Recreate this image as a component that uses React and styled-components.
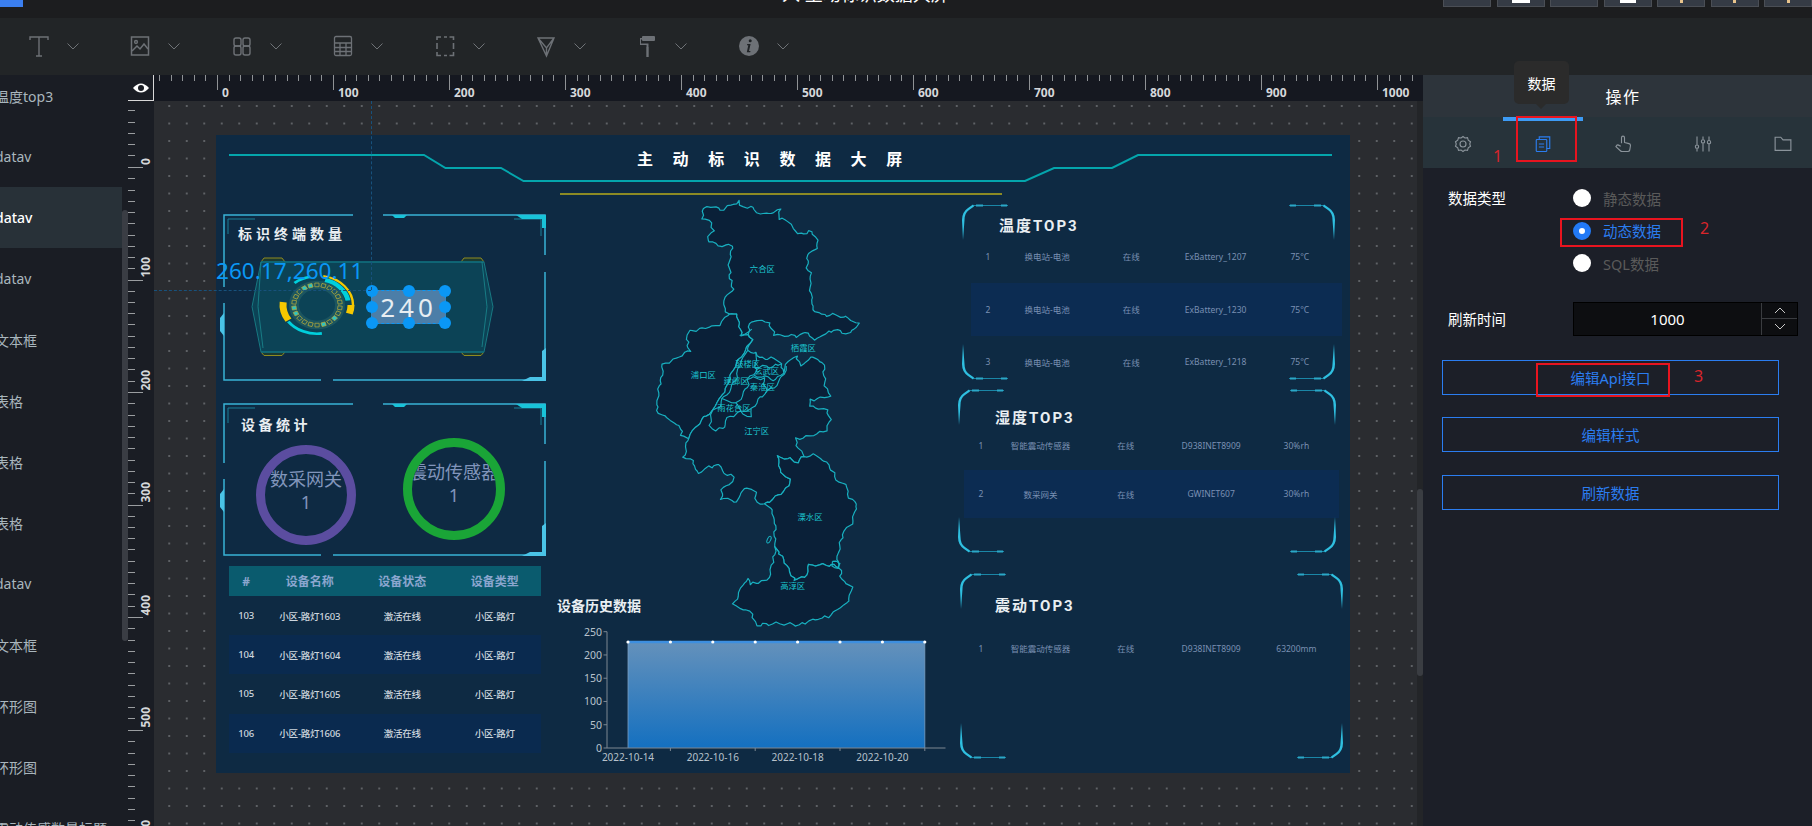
import React from 'react'
import styled, { createGlobalStyle } from 'styled-components'

const FONT = `"Noto Sans", "Noto Sans CJK SC", sans-serif`

// --- Data ---
const LAYERS = ['温度top3', 'datav', 'datav', 'datav', '文本框', '表格', '表格', '表格', 'datav', '文本框', '环形图', '环形图', '震动传感数量标题']
const TOP_MARKS = [0, 18, 0, 16, 3, 3, 3]
const DEVICES = [
  ['103', '小区-路灯1603'],
  ['104', '小区-路灯1604'],
  ['105', '小区-路灯1605'],
  ['106', '小区-路灯1606'],
]
const TEMP = [
  ['1', '换电站-电池', '在线', 'ExBattery_1207', '75°C'],
  ['2', '换电站-电池', '在线', 'ExBattery_1230', '75°C'],
  ['3', '换电站-电池', '在线', 'ExBattery_1218', '75°C'],
]
const HUMIDITY = [
  ['1', '智能震动传感器', '在线', 'D938INET8909', '30%rh'],
  ['2', '数采网关', '在线', 'GWINET607', '30%rh'],
]
const VIBRATION = [['1', '智能震动传感器', '在线', 'D938INET8909', '63200mm']]
const HANDLES = [
  [0, 0], [50, 0], [100, 0],
  [0, 50], [100, 50],
  [0, 100], [50, 100], [100, 100],
]

// --- Map outlines, traced in a 720x1320 box ---
const DISTRICTS = [
  [265,370, 250,345, 255,320, 268,310, 280,295, 272,270, 268,235, 275,165, 250,168, 235,165, 208,155, 205,140, 220,122, 215,100, 190,85, 185,65, 205,47, 225,52, 240,62, 270,45, 295,36, 300,50, 330,50, 350,68, 385,72, 400,66, 420,58, 415,88, 445,90, 458,110, 470,132, 490,130, 515,125, 535,155, 530,178, 505,185, 500,235, 515,262, 508,290, 516,320, 518,355, 545,375, 590,375, 625,385, 655,400, 630,430, 580,420, 545,435, 522,452, 505,425, 470,438, 405,435, 385,395, 345,392, 325,410, 325,430, 305,440, 290,375],
  [265,370, 240,405, 190,415, 150,425, 140,445, 148,480, 125,495, 70,525, 62,570, 55,620, 48,660, 75,680, 120,710, 125,735, 145,745, 170,705, 215,662, 250,610, 280,540, 310,490, 335,450, 325,430, 305,440, 290,375],
  [325,430, 335,450, 322,482, 350,490, 355,505, 395,505, 425,520, 430,545, 450,505, 470,500, 480,530, 495,515, 520,500, 550,520, 555,585, 572,618, 515,630, 508,650, 560,660, 570,690, 560,720, 520,735, 470,748, 470,770, 495,800, 475,815, 440,805, 415,800, 420,850, 450,865, 450,885, 420,910, 375,945, 350,935, 345,905, 315,895, 290,935, 245,925, 245,900, 280,875, 275,855, 250,850, 240,825, 205,830, 180,850, 165,840, 160,815, 130,800, 145,745, 170,705, 215,662, 250,610, 280,540, 310,490, 335,450],
  [375,945, 420,910, 450,885, 450,865, 420,850, 415,800, 440,805, 475,815, 495,800, 530,795, 560,820, 595,875, 620,885, 625,925, 650,940, 635,1000, 610,1030, 600,1070, 590,1105, 600,1130, 565,1125, 510,1125, 495,1160, 465,1170, 405,1070, 405,1000, 395,960],
  [405,1070, 465,1170, 495,1160, 510,1125, 565,1125, 600,1130, 605,1165, 635,1195, 620,1240, 565,1280, 520,1290, 480,1305, 420,1300, 350,1305, 330,1265, 280,1243, 310,1180, 325,1165, 330,1183, 385,1170, 400,1120],
]
const INNER_LINES = [
  [322,482, 300,520, 290,560, 275,590, 250,630, 290,640, 320,600, 325,565, 345,555, 348,510, 350,490],
  [348,530, 395,530, 425,520],
  [345,555, 410,570, 430,545],
  [325,565, 370,565, 380,610],
  [215,662, 208,705, 225,720, 245,715, 265,685, 300,665, 330,660, 355,630, 380,610, 420,570, 440,530],
  [250,630, 235,650, 215,662],
  [290,640, 300,665, 330,680, 335,660],
  [575,1118, 590,1112, 603,1120, 595,1135, 580,1132, 575,1118],
  [300,440, 335,420],
]
const MAP_LABELS = [
  ['六合区', 367, 238], ['浦口区', 190, 555], ['栖霞区', 490, 473], ['鼓楼区', 323, 522],
  ['玄武区', 380, 542], ['建邺区', 288, 574], ['秦淮区', 367, 590], ['雨花台区', 282, 654],
  ['江宁区', 350, 723], ['溧水区', 510, 980], ['高淳区', 458, 1187],
]

// --- Drawing helpers ---
const arc = (r, a0, a1) => {
  const p = (a) => [r * Math.cos((a * Math.PI) / 180), r * Math.sin((a * Math.PI) / 180)]
  const [x0, y0] = p(a0)
  const [x1, y1] = p(a1)
  return `M${x0} ${y0} A${r} ${r} 0 ${a1 - a0 > 180 ? 1 : 0} 1 ${x1} ${y1}`
}

// displace by a field of the position, so that shared borders stay shared
const wiggle = (x, y) => [
  x + 3.2 * Math.sin(y * 0.19 + x * 0.07) + 1.6 * Math.sin(y * 0.53 - x * 0.31),
  y + 3.2 * Math.sin(x * 0.17 - y * 0.05) + 1.6 * Math.sin(x * 0.47 + y * 0.29),
]
const roughPath = (pts, closed) => {
  const out = []
  const n = pts.length / 2
  const last = closed ? n : n - 1
  for (let i = 0; i < last; i++) {
    const x0 = pts[i * 2]
    const y0 = pts[i * 2 + 1]
    const x1 = pts[((i + 1) % n) * 2]
    const y1 = pts[((i + 1) % n) * 2 + 1]
    const steps = Math.max(1, Math.round(Math.hypot(x1 - x0, y1 - y0) / 10))
    for (let s = 0; s < steps; s++) {
      out.push(wiggle(x0 + ((x1 - x0) * s) / steps, y0 + ((y1 - y0) * s) / steps))
    }
  }
  if (!closed) out.push(wiggle(pts[pts.length - 2], pts[pts.length - 1]))
  return `M${out.map(([x, y]) => `${x.toFixed(1)} ${y.toFixed(1)}`).join(' L')}${closed ? ' Z' : ''}`
}

// --- Icons ---
const Chevron = () => (
  <svg width="12" height="7" viewBox="0 0 12 7" fill="none" stroke="#6f7377" strokeWidth="1">
    <path d="M0.5 0.5 L6 6 L11.5 0.5" />
  </svg>
)
const TOOL_ICONS = [
  <g key="t" fill="none" stroke="#6d7176" strokeWidth="1.4">
    <path d="M2 5 V2 H20 V5 M11 2 V21 M8 21 H14" />
  </g>,
  <g key="image" fill="none" stroke="#6d7176" strokeWidth="1.5">
    <rect x="2.5" y="2" width="17" height="18" />
    <circle cx="7" cy="7" r="1.4" />
    <path d="M3 16 L8 11 L11 14 L15 9 L19 14" />
  </g>,
  <g key="88" fill="none" stroke="#6d7176" strokeWidth="1.4">
    <rect x="3" y="3" width="7" height="8" rx="2" />
    <rect x="3" y="11" width="7" height="9" rx="2" />
    <rect x="12" y="3" width="7" height="8" rx="2" />
    <rect x="12" y="11" width="7" height="9" rx="2" />
  </g>,
  <g key="table" fill="none" stroke="#6d7176" strokeWidth="1.3">
    <rect x="2.5" y="1.5" width="17" height="19" rx="1.5" />
    <path d="M2.5 8 H19.5 M2.5 12.5 H19.5 M2.5 16.5 H19.5 M8 8 V20.5 M14 8 V20.5" />
  </g>,
  <g key="frame" fill="none" stroke="#6d7176" strokeWidth="1.6">
    <path d="M3 5 V2 H7 M10 2 H13 M15.5 2 H19.5 V5 M19.5 8 V14 M19.5 17 V20.5 H15.5 M13 20.5 H10 M7 20.5 H3 V17 M3 14 V8" />
  </g>,
  <g key="filter" fill="none" stroke="#6d7176" strokeWidth="1.4">
    <path d="M3 3 L19 3 L11.5 21 Z M3 3 L11.5 13 L19 3 M11.5 13 V21" />
  </g>,
  <g key="roller" fill="#6d7176" stroke="none">
    <rect x="6" y="1" width="13" height="5" rx="1" />
    <path d="M4 3 H6 V4.5 H5 V8.5 H12.5 V12 H10.5 V10 H4 Z" />
    <rect x="10.3" y="12" width="2.4" height="10" />
  </g>,
  <g key="info">
    <circle cx="11" cy="11" r="10" fill="#6d7176" />
    <circle cx="12.2" cy="5.7" r="1.5" fill="#1f2326" />
    <path d="M9.2 9 H12.6 L11 16 H12.5 L12.2 17.3 H8.8 L10.3 10.3 H9 Z" fill="#1f2326" />
  </g>,
]
const PANEL_ICONS = [
  <g key="gear" fill="none" stroke="#8b949b" strokeWidth="1.5">
    <path d="M12 2 L14.5 4 L18 3.6 L19 6.8 L22 9 L21 12 L22 15 L19 17.2 L18 20.4 L14.5 20 L12 22 L9.5 20 L6 20.4 L5 17.2 L2 15 L3 12 L2 9 L5 6.8 L6 3.6 L9.5 4 Z" />
    <circle cx="12" cy="12" r="4" />
  </g>,
  <g key="doc" fill="none" stroke="#2b7df0" strokeWidth="1.5">
    <rect x="3" y="6" width="14" height="16" rx="1" />
    <path d="M7 6 V2.5 H21 V18 H17 M6.5 12 H13.5 M6.5 16 H13.5" />
  </g>,
  <g key="hand" fill="none" stroke="#8b949b" strokeWidth="1.5" strokeLinejoin="round">
    <path d="M10 11 V3.5 A2 2 0 0 1 14 3.5 V10 L20 11.5 Q22 12 22 14 L21 20 Q20.5 22 18.5 22 H11 Q9.5 22 8.5 21 L2.5 15.5 L4 13.5 Q5 13 6 13.5 L9 15" />
  </g>,
  <g key="sliders" fill="none" stroke="#8b949b" strokeWidth="1.5">
    <path d="M4 2 V13 M4 18 V22 M12 2 V6 M12 11 V22 M20 2 V7 M20 12 V22" />
    <circle cx="4" cy="15.5" r="2.2" />
    <circle cx="12" cy="8.5" r="2.2" />
    <circle cx="20" cy="9.5" r="2.2" />
  </g>,
  <g key="folder" fill="none" stroke="#8b949b" strokeWidth="1.5">
    <path d="M1.5 3 H9 L12 6.5 H22.5 V20.5 H1.5 Z" />
  </g>,
]

// --- Global ---
const GlobalStyle = createGlobalStyle`
  html, body { margin: 0; padding: 0; background: #1c1d1f; }
  * { box-sizing: border-box; }
  #root { width: 1812px; height: 826px; overflow: hidden; font-family: ${FONT}; }
`

// --- Shell ---
const Page = styled.div`
  display: flex;
  flex-direction: column;
  width: 1812px;
  height: 826px;
  overflow: hidden;
  background: #1c1d1f;
`
const TopBar = styled.header`
  flex: none;
  height: 18px;
  display: flex;
  align-items: flex-start;
  background: #1c1d1f;
  overflow: hidden;
`
const Brand = styled.div`
  flex: none;
  width: 23px;
  height: 7px;
  background: #3b7ff0;
`
const DocTitle = styled.div`
  margin: -18px 0 0 759px;
  width: 190px;
  flex: none;
  font-size: 18px;
  line-height: 24px;
  color: #fff;
  white-space: nowrap;
`
const TopActions = styled.div`
  margin-left: auto;
  display: flex;
  gap: 5.5px;
`
const TopButton = styled.div`
  width: 48px;
  height: 7px;
  display: flex;
  justify-content: center;
  background: #353b45;
  border: 1px solid #4a4e55;
  border-top: 0;
`
const TopMark = styled.span`
  width: ${(p) => p.$w}px;
  height: 3px;
  background: ${(p) => (p.$w < 5 ? '#e9c48c' : '#fff')};
`
const Toolbar = styled.div`
  flex: none;
  height: 57px;
  display: flex;
  align-items: center;
  padding-left: 28px;
  background: #222527;
`
const ToolItem = styled.div`
  flex: none;
  width: 101.4px;
  display: flex;
  align-items: center;
  gap: 17px;
`
const ToolIcon = styled.svg`
  width: 22px;
  height: 24px;
`
const Main = styled.div`
  flex: 1;
  display: flex;
  min-height: 0;
`

// --- Layer list ---
const Sidebar = styled.aside`
  flex: none;
  position: relative;
  width: 128px;
  background: #1a1d24;
  overflow: hidden;
`
const LayerRow = styled.div`
  width: 122px;
  height: 61px;
  display: flex;
  align-items: center;
  font-size: 14px;
  white-space: nowrap;
  overflow: hidden;
  color: ${(p) => (p.$active ? '#fff' : '#a9b6bd')};
  background: ${(p) => (p.$active ? '#283138' : 'transparent')};
  font-weight: ${(p) => (p.$active ? 500 : 400)};
  &:first-child { margin-top: -10px; }
`
const LayerName = styled.span`
  margin-left: -5px;
`
const LayerScroll = styled.div`
  position: absolute;
  top: 135px;
  right: 0;
  width: 6px;
  height: 431px;
  border-radius: 3px;
  background: #3a3d44;
`

// --- Workspace with rulers ---
const Workspace = styled.section`
  flex: none;
  width: 1295px;
  display: grid;
  grid-template-columns: 26px 1fr;
  grid-template-rows: 26px 1fr;
`
const RulerCorner = styled.div`
  display: flex;
  align-items: center;
  justify-content: center;
  background: #1a1d24;
  border-right: 1px solid #d8d8d8;
  border-bottom: 1px solid #d8d8d8;
`
const HRuler = styled.div`
  display: flex;
  overflow: hidden;
  background: #151820;
`
const HCell = styled.div`
  flex: none;
  width: 116px;
  height: 26px;
  padding: 9px 0 0 5px;
  font-size: 12px;
  line-height: 17px;
  font-weight: 700;
  color: #d5d7da;
  background:
    linear-gradient(#8f9295, #8f9295) left top / 1px 15px no-repeat,
    repeating-linear-gradient(to right, #8f9295 0 1px, transparent 1px 11.6px) left top / 100% 6px no-repeat;
  &:first-child { margin-left: -53px; }
`
const VRuler = styled.div`
  display: flex;
  flex-direction: column;
  overflow: hidden;
  background: #1a1d24;
`
const VCell = styled.div`
  flex: none;
  height: 112.6px;
  display: flex;
  align-items: flex-end;
  padding: 0 0 3px 12px;
  background:
    linear-gradient(#9a9da0, #9a9da0) left bottom / 15px 1px no-repeat,
    repeating-linear-gradient(to top, #9a9da0 0 1px, transparent 1px 11.26px) left bottom / 7px 100% no-repeat;
  &:first-child { margin-top: -45.6px; }
`
const VLabel = styled.span`
  writing-mode: vertical-rl;
  transform: rotate(180deg);
  font-size: 12px;
  line-height: 12px;
  font-weight: 700;
  color: #d5d7da;
`
const Canvas = styled.div`
  position: relative;
  overflow: hidden;
  background-color: #2a2c30;
  background-image: radial-gradient(circle, #5f6266 1px, transparent 1.2px);
  background-size: 17.5px 17.5px;
  background-position: 6.5px -3.75px;
`
const CanvasTrack = styled.div`
  position: absolute;
  top: 0;
  right: 0;
  bottom: 0;
  width: 6px;
  background: #232528;
`
const CanvasThumb = styled.div`
  position: absolute;
  top: 388px;
  right: 0;
  width: 6px;
  height: 187px;
  border-radius: 3px;
  background: #3a3d42;
`
const GuideV = styled.div`
  position: absolute;
  z-index: 3;
  left: 217px;
  top: 0;
  height: 189px;
  border-left: 1px dashed #17517c;
`
const GuideH = styled.div`
  position: absolute;
  z-index: 3;
  left: 0;
  top: 189px;
  width: 217px;
  border-top: 1px dashed #17517c;
`

// --- Big screen, a free canvas ---
const Screen = styled.div`
  position: absolute;
  left: 62px;
  top: 34px;
  width: 1134px;
  height: 638px;
  background: #0e2a43;
`
const Widget = styled.div`
  position: absolute;
  left: ${(p) => p.$x}px;
  top: ${(p) => p.$y}px;
  width: ${(p) => p.$w}px;
  height: ${(p) => p.$h}px;
`
const WidgetArt = styled.svg`
  display: block;
  width: 100%;
  height: 100%;
  overflow: visible;
`
const ScreenTitle = styled.h1`
  margin: 0;
  font-size: 16px;
  line-height: 24px;
  font-weight: 700;
  letter-spacing: 19.6px;
  color: #fff;
  white-space: nowrap;
`
const GoldRule = styled.div`
  height: 2px;
  background: #8b8a24;
`
const BoxTitle = styled.h2`
  margin: 0;
  font-size: 14px;
  line-height: 20px;
  font-weight: 700;
  letter-spacing: ${(p) => p.$spacing ?? 4}px;
  color: #e9eef2;
  white-space: nowrap;
`
const Coord = styled.div`
  font-size: 22.6px;
  line-height: 30px;
  color: #0a97f5;
  white-space: nowrap;
`
const ValueBox = styled.div`
  position: relative;
  height: 100%;
  display: flex;
  align-items: center;
  justify-content: center;
  background: #4c7ea8;
  border: 1px dashed #0a97f5;
  font-size: 26px;
  letter-spacing: 4px;
  color: #e8eef2;
`
const Handle = styled.span`
  position: absolute;
  left: ${(p) => p.$l}%;
  top: ${(p) => p.$t}%;
  width: 12px;
  height: 12px;
  margin: -6px 0 0 -6px;
  border-radius: 50%;
  background: #0a97f5;
`
const Donut = styled.div`
  width: 100%;
  height: 100%;
  display: flex;
  flex-direction: column;
  align-items: center;
  justify-content: center;
  padding-bottom: ${(p) => p.$lift}px;
  border-radius: 50%;
  border: 9px solid ${(p) => p.$color};
  overflow: hidden;
  color: #8195bb;
  font-size: 18px;
  line-height: 23px;
  white-space: nowrap;
`

// --- Device table ---
const DeviceTable = styled.div`
  display: flex;
  flex-direction: column;
`
const DeviceHead = styled.div`
  display: grid;
  grid-template-columns: 35px repeat(3, 1fr);
  height: 30px;
  background: #0a5b6e;
  color: #8ba6cf;
  font-size: 12px;
  font-weight: 700;
`
const DeviceRow = styled.div`
  display: grid;
  grid-template-columns: 35px repeat(3, 1fr);
  height: 39.2px;
  background: ${(p) => (p.$striped ? '#0a2a4f' : 'transparent')};
  color: #cdd6de;
  font-size: 9.5px;
  font-weight: 500;
  letter-spacing: -0.2px;
`
const TableCell = styled.div`
  display: flex;
  align-items: center;
  justify-content: center;
  white-space: nowrap;
`

// --- Rank tables ---
const RankBox = styled.div`
  position: relative;
  height: 100%;
`
const Corner = styled.svg`
  position: absolute;
  width: 46px;
  height: 37px;
  ${(p) => (p.$bottom ? 'bottom: 0;' : 'top: 0;')}
  ${(p) => (p.$right ? 'right: 0;' : 'left: 0;')}
  transform: scale(${(p) => (p.$right ? -1 : 1)}, ${(p) => (p.$bottom ? -1 : 1)});
`
const RankTitle = styled.h3`
  margin: 0;
  padding: ${(p) => p.$top}px 0 0 ${(p) => p.$pad}px;
  height: ${(p) => p.$h}px;
  display: flex;
  align-items: center;
  font-family: Roboto, "Noto Sans CJK SC", sans-serif;
  font-size: 15px;
  font-weight: 700;
  letter-spacing: 2px;
  color: #e9eef2;
  white-space: nowrap;
`
const RankRows = styled.div`
  margin-left: ${(p) => p.$left}px;
  width: ${(p) => p.$w}px;
`
const RankRow = styled.div`
  display: grid;
  grid-template-columns: 34px repeat(4, 1fr);
  height: ${(p) => p.$h}px;
  background: ${(p) => (p.$striped ? '#0c2c52' : 'transparent')};
  color: #7a90b2;
  font-size: 8.5px;
`

// --- Right panel ---
const Panel = styled.aside`
  flex: none;
  position: relative;
  z-index: 5;
  width: 389px;
  display: flex;
  flex-direction: column;
  background: #1c1f28;
`
const PanelHead = styled.div`
  flex: none;
  height: 42px;
  padding-left: 11px;
  display: flex;
  align-items: center;
  justify-content: center;
  background: #2d343b;
  color: #fff;
  font-size: 16px;
  letter-spacing: 1.5px;
`
const TabBar = styled.div`
  flex: none;
  height: 51px;
  display: flex;
  overflow: hidden;
  background: #27333a;
`
const Tab = styled.div`
  flex: none;
  width: 80px;
  display: flex;
  align-items: center;
  justify-content: center;
  padding-top: 2px;
  box-shadow: ${(p) => (p.$active ? 'inset 0 4px 0 #3d9bf5' : 'none')};
`
const TabIcon = styled.svg`
  width: 18px;
  height: 18px;
`
const Tooltip = styled.div`
  position: absolute;
  left: 91px;
  top: -14px;
  width: 55px;
  height: 43px;
  display: flex;
  align-items: center;
  justify-content: center;
  border-radius: 5px;
  background: #2b2b2b;
  color: #fff;
  font-size: 14px;
  &::after {
    content: '';
    position: absolute;
    left: 22px;
    bottom: -5px;
    border-left: 5px solid transparent;
    border-right: 5px solid transparent;
    border-top: 5px solid #2b2b2b;
  }
`
const Form = styled.div`
  flex: 1;
  padding: 14px 0 0 25px;
  display: flex;
  flex-direction: column;
`
const FormRow = styled.div`
  display: flex;
  align-items: ${(p) => (p.$center ? 'center' : 'flex-start')};
  margin-top: ${(p) => p.$top || 0}px;
`
const FormLabel = styled.div`
  flex: none;
  width: 125px;
  font-size: 14.5px;
  line-height: 32px;
  color: #fff;
`
const RadioGroup = styled.div`
  display: flex;
  flex-direction: column;
`
const RadioRow = styled.div`
  height: 32.5px;
  display: flex;
  align-items: center;
  gap: 12px;
  font-size: 14.5px;
  color: ${(p) => (p.$on ? '#2b7df0' : '#5a5a5a')};
`
const RadioDot = styled.span`
  flex: none;
  width: 18px;
  height: 18px;
  border-radius: 50%;
  background: #fff;
  border: ${(p) => (p.$on ? '6.5px solid #2279f5' : '0')};
`
const NumberInput = styled.div`
  flex: none;
  width: 225px;
  height: 34px;
  display: flex;
  background: #0d0e11;
  border: 1px solid #000;
`
const NumberValue = styled.div`
  flex: 1;
  display: flex;
  align-items: center;
  justify-content: center;
  color: #fff;
  font-size: 15px;
`
const Stepper = styled.div`
  flex: none;
  width: 36px;
  display: flex;
  flex-direction: column;
  border-left: 1px solid #3a3c40;
`
const StepBtn = styled.div`
  flex: 1;
  display: flex;
  align-items: center;
  justify-content: center;
  & + & { border-top: 1px solid #3a3c40; }
`
const ButtonStack = styled.div`
  margin: 24px 0 0 -6px;
  width: 337px;
  display: flex;
  flex-direction: column;
  gap: 22.5px;
`
const OutlineButton = styled.div`
  height: 35px;
  display: flex;
  align-items: center;
  justify-content: center;
  border: 1px solid #2b7df0;
  color: #2b7df0;
  font-size: 14.5px;
`
const RedBox = styled.div`
  position: absolute;
  left: ${(p) => p.$x}px;
  top: ${(p) => p.$y}px;
  width: ${(p) => p.$w}px;
  height: ${(p) => p.$h}px;
  border: 2px solid #e8141f;
`
const RedNumber = styled.span`
  position: absolute;
  left: ${(p) => p.$x}px;
  top: ${(p) => p.$y}px;
  color: #d9252b;
  font-size: 16px;
  line-height: 20px;
`

// --- Widgets drawn as art ---
const HudFrame = ({ w, h, gap }) => (
  <WidgetArt viewBox={`0 0 ${w} ${h}`} fill="none">
    <path d={`M1 ${gap} V1 H130 M160 1 H${w - 1} V41 M${w - 1} 58 V${h - 1} H110 M98 ${h - 1} H1 V${gap + 16}`} stroke="#38b3d6" strokeWidth="1.5" />
    <path d={`M5 20 V5 H32 M${w - 32} 5 H${w - 5} V22`} stroke="#1a7f98" strokeWidth="1" />
    <path d={`M169 1 H184 L181 4 H172 Z M${w - 30} 1 H${w} V14 L${w - 4} 14 V5 H${w - 24} Z`} fill="#19c3d9" />
    <path d={`M${w} ${h} H${w - 24} L${w - 16} ${h - 4} H${w - 4} V${h - 30} L${w} ${h - 33} Z`} fill="#4ac3e6" />
    <path d={`M1 ${gap + 26} L-3 ${gap + 31} V${gap + 44} L1 ${gap + 49} Z`} fill="#4ac3e6" />
  </WidgetArt>
)

const Gauge = () => (
  <WidgetArt viewBox="245 255 255 105" fill="none">
    <path d="M261 262 L264 258 H282 L285 262 M461 262 L464 258 H481 L484 262 M261 352 L264 355.5 H282 L285 352 M461 352 L464 355.5 H481 L484 352" stroke="#8f8a20" strokeWidth="1" fill="#1c3a30" />
    <polygon points="261,262 484,262 493,306.7 484,352 261,352 252,306.7" fill="#0c4356" stroke="#1a8a90" strokeWidth="0.8" />
    <path d="M261 262 H484 M261 352 H484" stroke="#0f6a7a" strokeWidth="1.6" />
    <path d="M261 262 L258 306.7 L263 348 M482 262 L487 306.7 L482 347" stroke="#1a8a90" strokeWidth="0.8" />
    <g transform="translate(317 305) scale(1 .87)">
      <circle r="23" stroke="#1b5560" strokeWidth="10" />
      {Array.from({ length: 22 }, (_, i) => {
        const filled = [2, 4, 9, 10, 14, 15].includes(i)
        return (
          <rect
            key={i}
            x="21"
            y="-2.1"
            width="4.2"
            height="4.2"
            transform={`rotate(${(i * 360) / 22 + 8})`}
            stroke="#b0a83a"
            strokeWidth="0.8"
            fill={filled ? '#2cc4c4' : 'none'}
          />
        )
      })}
    </g>
    <g transform="translate(317 305) scale(1 .82)">
      <path d={arc(34, 147, 186)} stroke="#f5c800" strokeWidth="7" />
      <path d={arc(35, 82, 145)} stroke="#00cfdc" strokeWidth="3.2" />
      <path d={arc(35, 230, 259)} stroke="#00cfdc" strokeWidth="3.2" />
      <path d={arc(36, 280, 360)} stroke="#f5c800" strokeWidth="2.4" />
      <path d={arc(31.5, 285, 350)} stroke="#00cfdc" strokeWidth="5" />
      <path d={arc(34, 0, 18)} stroke="#f5c800" strokeWidth="7" />
    </g>
  </WidgetArt>
)

const DistrictMap = () => (
  <WidgetArt viewBox="0 0 720 1320" fill="none">
    {DISTRICTS.map((pts, i) => (
      <path key={i} d={roughPath(pts, true)} fill="#0a2038" stroke="#18b0c0" strokeWidth="3.6" strokeLinejoin="round" />
    ))}
    {INNER_LINES.map((pts, i) => (
      <path key={i} d={roughPath(pts, false)} stroke="#18b0c0" strokeWidth="3.4" strokeLinejoin="round" />
    ))}
    <ellipse cx="387" cy="1049" rx="5" ry="11" transform="rotate(25 387 1049)" stroke="#18b0c0" strokeWidth="3" />
    {MAP_LABELS.map(([name, x, y]) => (
      <text key={name} x={x} y={y + 9} textAnchor="middle" fontSize="25" fill="#1cc5cf" fontFamily={FONT}>{name}</text>
    ))}
  </WidgetArt>
)

const HistoryChart = () => {
  const xs = Array.from({ length: 8 }, (_, i) => 628 + i * 42.4)
  const ys = [250, 200, 150, 100, 50, 0]
  return (
    <WidgetArt viewBox="590 625 360 140" fill="none">
      <defs>
        <linearGradient id="area" x1="0" y1="0" x2="0" y2="1">
          <stop offset="0" stopColor="#6491bb" />
          <stop offset="1" stopColor="#1470c0" />
        </linearGradient>
      </defs>
      <rect x="628" y="642" width="296.8" height="106" fill="url(#area)" />
      <path d="M628 642 V748 M924.8 642 V748" stroke="#7b9fc2" strokeWidth="0.8" />
      <path d="M628 642 H924.8" stroke="#3d8fe0" strokeWidth="2.5" />
      <path d="M607 631.7 V748 H945.5" stroke="#7c8792" strokeWidth="1" />
      {ys.map((v, i) => (
        <g key={v}>
          <path d={`M603.5 ${631.7 + i * 23.26} H607`} stroke="#7c8792" />
          <text x="602" y={635.5 + i * 23.26} textAnchor="end" fontSize="10.5" fill="#b8c2cc" fontFamily={FONT}>{v}</text>
        </g>
      ))}
      {xs.map((x) => <circle key={x} cx={x} cy="642" r="1.6" fill="#fff" />)}
      {[670.4, 755.2, 840, 924.8].map((x) => <path key={x} d={`M${x} 748 V751`} stroke="#7c8792" />)}
      {['2022-10-14', '2022-10-16', '2022-10-18', '2022-10-20'].map((t, i) => (
        <text key={t} x={628 + i * 84.8} y="761" textAnchor="middle" fontSize="10" fill="#b8c2cc" fontFamily={FONT}>{t}</text>
      ))}
    </WidgetArt>
  )
}

const FrameCorners = () => (
  <>
    {[[false, false], [true, false], [false, true], [true, true]].map(([right, bottom]) => (
      <Corner key={`${right}-${bottom}`} $right={right} $bottom={bottom} viewBox="0 0 46 37" fill="none">
        <path d="M10 1.5 H46" stroke="#1a86a6" strokeWidth="1" />
        <path d="M1 36 L0 16 Q0 8 6 4 L11 0.5 L12 2.5 L7 6 Q2.5 9 2.5 16 Z" fill="#2fbfe0" />
        <path d="M14 1.5 H21 M39 1.5 H45" stroke="#2aa8c8" strokeWidth="2" />
      </Corner>
    ))}
  </>
)

const RankWidget = ({ title, rows, pad, titleTop, titleH, left, width, rowH }) => (
  <RankBox>
    <FrameCorners />
    <RankTitle $pad={pad} $top={titleTop} $h={titleH}>{title}</RankTitle>
    <RankRows $left={left} $w={width}>
      {rows.map((row, i) => (
        <RankRow key={row[0]} $h={rowH} $striped={i === 1}>
          {row.map((cell, j) => <TableCell key={j}>{cell}</TableCell>)}
        </RankRow>
      ))}
    </RankRows>
  </RankBox>
)

// --- App ---
const App = () => {
  const hLabels = Array.from({ length: 12 }, (_, i) => (i === 0 ? '' : String((i - 1) * 100)))
  const vLabels = [0, 100, 200, 300, 400, 500, 600]
  return (
    <>
      <GlobalStyle />
      <Page>
        <TopBar>
          <Brand />
          <DocTitle>入 主动标识数据大屏</DocTitle>
          <TopActions>
            {TOP_MARKS.map((w, i) => (
              <TopButton key={i}>{w > 0 && <TopMark $w={w} />}</TopButton>
            ))}
          </TopActions>
        </TopBar>
        <Toolbar>
          {TOOL_ICONS.map((icon, i) => (
            <ToolItem key={i}>
              <ToolIcon viewBox="0 0 22 24">{icon}</ToolIcon>
              <Chevron />
            </ToolItem>
          ))}
        </Toolbar>
        <Main>
          <Sidebar>
            {LAYERS.map((name, i) => (
              <LayerRow key={i} $active={i === 2}>
                <LayerName>{name}</LayerName>
              </LayerRow>
            ))}
            <LayerScroll />
          </Sidebar>
          <Workspace>
            <RulerCorner>
              <svg width="16" height="12" viewBox="0 0 16 12">
                <path d="M0 6 Q8 -3 16 6 Q8 15 0 6 Z" fill="#fff" />
                <circle cx="8" cy="6" r="3" fill="#1a1d24" />
              </svg>
            </RulerCorner>
            <HRuler>
              {hLabels.map((label, i) => <HCell key={i}>{label}</HCell>)}
            </HRuler>
            <VRuler>
              {vLabels.map((label) => (
                <VCell key={label}><VLabel>{label}</VLabel></VCell>
              ))}
            </VRuler>
            <Canvas>
              <GuideV />
              <GuideH />
              <Screen>
                <Widget $x={8} $y={0} $w={1125} $h={60}>
                  <WidgetArt viewBox="224 135 1125 60" fill="none">
                    <path d="M229 155 H424 L445.5 168 H501 L523.5 181 H1025 L1054 168 H1112 L1138 155 H1332" stroke="#04a5ac" strokeWidth="2" />
                  </WidgetArt>
                </Widget>
                <Widget $x={421} $y={12} $w={290} $h={24}>
                  <ScreenTitle>主动标识数据大屏</ScreenTitle>
                </Widget>
                <Widget $x={344} $y={57.5} $w={442} $h={2}>
                  <GoldRule />
                </Widget>

                <Widget $x={7} $y={79} $w={323} $h={167}>
                  <HudFrame w={323} h={167} gap={73} />
                </Widget>
                <Widget $x={22} $y={89} $w={120} $h={20}>
                  <BoxTitle>标识终端数量</BoxTitle>
                </Widget>
                <Widget $x={29} $y={120} $w={255} $h={105}>
                  <Gauge />
                </Widget>
                <Widget $x={155} $y={155} $w={75} $h={34}>
                  <ValueBox>
                    240
                    {HANDLES.map(([l, t]) => <Handle key={`${l}-${t}`} $l={l} $t={t} />)}
                  </ValueBox>
                </Widget>
                <Widget $x={0} $y={121} $w={160} $h={30}>
                  <Coord>260.17,260.11</Coord>
                </Widget>

                <Widget $x={7} $y={268} $w={323} $h={153}>
                  <HudFrame w={323} h={153} gap={60} />
                </Widget>
                <Widget $x={25} $y={280} $w={90} $h={20}>
                  <BoxTitle $spacing={3.5}>设备统计</BoxTitle>
                </Widget>
                <Widget $x={40} $y={310} $w={100} $h={100}>
                  <Donut $color="#5b4da0" $lift={8}>数采网关<span>1</span></Donut>
                </Widget>
                <Widget $x={187} $y={303} $w={102} $h={102}>
                  <Donut $color="#1aa537" $lift={10}>震动传感器<span>1</span></Donut>
                </Widget>

                <Widget $x={12.6} $y={431} $w={312.4} $h={188}>
                  <DeviceTable>
                    <DeviceHead>
                      {['#', '设备名称', '设备状态', '设备类型'].map((h) => <TableCell key={h}>{h}</TableCell>)}
                    </DeviceHead>
                    {DEVICES.map(([id, name], i) => (
                      <DeviceRow key={id} $striped={i % 2 === 1}>
                        <TableCell>{id}</TableCell>
                        <TableCell>{name}</TableCell>
                        <TableCell>激活在线</TableCell>
                        <TableCell>小区-路灯</TableCell>
                      </DeviceRow>
                    ))}
                  </DeviceTable>
                </Widget>

                <Widget $x={424} $y={55} $w={240} $h={440}>
                  <DistrictMap />
                </Widget>

                <Widget $x={341} $y={461} $w={100} $h={20}>
                  <BoxTitle $spacing={0}>设备历史数据</BoxTitle>
                </Widget>
                <Widget $x={374} $y={490} $w={360} $h={140}>
                  <HistoryChart />
                </Widget>

                <Widget $x={746} $y={69} $w={373} $h={176}>
                  <RankWidget title="温度TOP3" rows={TEMP} pad={37} titleTop={14} titleH={26} left={9} width={371} rowH={52.8} />
                </Widget>
                <Widget $x={742} $y={254} $w={378} $h={164}>
                  <RankWidget title="湿度TOP3" rows={HUMIDITY} pad={37} titleTop={22} titleH={32} left={6} width={375} rowH={48.6} />
                </Widget>
                <Widget $x={744} $y={438} $w={383} $h={186}>
                  <RankWidget title="震动TOP3" rows={VIBRATION} pad={35} titleTop={11.5} titleH={50.5} left={4} width={375} rowH={49} />
                </Widget>
              </Screen>
              <CanvasTrack />
              <CanvasThumb />
            </Canvas>
          </Workspace>
          <Panel>
            <PanelHead>操作</PanelHead>
            <TabBar>
              {PANEL_ICONS.map((icon, i) => (
                <Tab key={i} $active={i === 1}>
                  <TabIcon viewBox="0 0 24 24">{icon}</TabIcon>
                </Tab>
              ))}
            </TabBar>
            <Form>
              <FormRow>
                <FormLabel>数据类型</FormLabel>
                <RadioGroup>
                  <RadioRow><RadioDot />静态数据</RadioRow>
                  <RadioRow $on><RadioDot $on />动态数据</RadioRow>
                  <RadioRow><RadioDot />SQL数据</RadioRow>
                </RadioGroup>
              </FormRow>
              <FormRow $center $top={22}>
                <FormLabel>刷新时间</FormLabel>
                <NumberInput>
                  <NumberValue>1000</NumberValue>
                  <Stepper>
                    <StepBtn>
                      <svg width="12" height="7" viewBox="0 0 12 7" fill="none" stroke="#c8c8c8"><path d="M1 6 L6 1 L11 6" /></svg>
                    </StepBtn>
                    <StepBtn>
                      <svg width="12" height="7" viewBox="0 0 12 7" fill="none" stroke="#c8c8c8"><path d="M1 1 L6 6 L11 1" /></svg>
                    </StepBtn>
                  </Stepper>
                </NumberInput>
              </FormRow>
              <ButtonStack>
                <OutlineButton>编辑Api接口</OutlineButton>
                <OutlineButton>编辑样式</OutlineButton>
                <OutlineButton>刷新数据</OutlineButton>
              </ButtonStack>
            </Form>
            <Tooltip>数据</Tooltip>
            <RedBox $x={93} $y={41} $w={61} $h={46} />
            <RedBox $x={137} $y={143} $w={123} $h={29} />
            <RedBox $x={113} $y={288} $w={134} $h={34} />
            <RedNumber $x={70} $y={71}>1</RedNumber>
            <RedNumber $x={277} $y={143}>2</RedNumber>
            <RedNumber $x={271} $y={291}>3</RedNumber>
          </Panel>
        </Main>
      </Page>
    </>
  )
}

export default App
